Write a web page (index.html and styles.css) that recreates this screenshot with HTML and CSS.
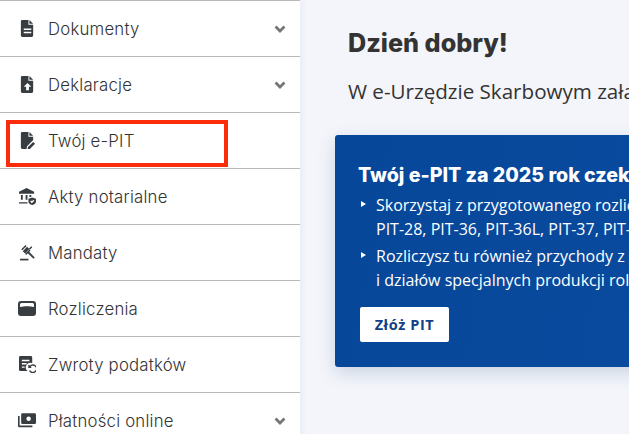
FILE: index.html
```html
<!DOCTYPE html>
<html lang="pl">
<head>
  <meta charset="UTF-8" />
  <meta name="viewport" content="width=device-width, initial-scale=1.0" />
  <title>e-Urząd Skarbowy</title>
  <link rel="stylesheet" href="styles.css">
</head>
<body>
  <nav class="menu">
    <a class="pozycja">
      <svg class="ikona" viewBox="0 0 16 18"><path d="M3 0h6v5h5v11.500a1.500 1.500 0 0 1-1.500 1.500h-10A1.500 1.500 0 0 1 1 16.500v-15A1.500 1.500 0 0 1 3 0zM10 0l4 4h-4zM4 9v1.500h8V9zM4 12.500V14h8v-1.500z" fill-rule="evenodd"/></svg>
      <span class="nazwa">Dokumenty</span>
      <svg class="strzalka" viewBox="0 0 12 8"><path d="M1.500 1.500L6 6l4.500-4.500"/></svg>
    </a>
    <a class="pozycja">
      <svg class="ikona" viewBox="0 0 16 18"><path d="M3 0h6v5h5v11.500a1.500 1.500 0 0 1-1.500 1.500h-10A1.500 1.500 0 0 1 1 16.500v-15A1.500 1.500 0 0 1 3 0zM10 0l4 4h-4zM8 7.500L4 11.500h2.500V15h3v-3.500H12z" fill-rule="evenodd"/></svg>
      <span class="nazwa">Deklaracje</span>
      <svg class="strzalka" viewBox="0 0 12 8"><path d="M1.500 1.500L6 6l4.500-4.500"/></svg>
    </a>
    <a class="pozycja">
      <svg class="ikona" viewBox="0 0 16 18"><path d="M3 0h6v5h5v3.500L7.500 15l-.5 3H2.500A1.500 1.500 0 0 1 1 16.500v-15A1.500 1.500 0 0 1 3 0zM10 0l4 4h-4zM14 10.500l2 2-5.500 5.500-2.500.5.500-2.500z"/></svg>
      <span class="nazwa">Twój e-PIT</span>
      <span class="ramka"></span>
    </a>
    <a class="pozycja">
      <svg class="ikona" viewBox="0 0 18 18"><path d="M8 0L0 4v2h16V4zM0 15h9v1.500H0zM2 7.500h2v5H2zM7 7.500h2v5H7zM11 7.500h2v2h-2zM14 10l4 1.300v3c0 2-1.700 3.200-4 3.700-2.300-.5-4-1.700-4-3.700v-3z"/><path class="wyciecie" d="M12.300 13.800l1.300 1.300 2.200-2.200"/></svg>
      <span class="nazwa">Akty notarialne</span>
    </a>
    <a class="pozycja">
      <svg class="ikona" viewBox="0 0 18 18"><path class="mlotek" d="M3 7l4.500-4.500M11 6.500l2.500-2.500" stroke-width="1.600" transform="translate(0 -1)"/><path class="mlotek" d="M5.200 8.800L9.800 4.200" stroke-width="3.400"/><path class="mlotek" d="M7 11l4.600-4.600" stroke-width="1.600"/><path class="mlotek" d="M9.500 8.500l6.500 6.500" stroke-width="2"/><path class="mlotek" d="M1 16.500h9" stroke-width="1.800"/></svg>
      <span class="nazwa">Mandaty</span>
    </a>
    <a class="pozycja">
      <svg class="ikona szeroka" viewBox="0 0 18 15"><path d="M3 0h12a3 3 0 0 1 3 3v9a3 3 0 0 1-3 3H3a3 3 0 0 1-3-3V3a3 3 0 0 1 3-3zM3.500 2A1.500 1.500 0 0 0 2 3.500V6c4-1 10-1 14 0V3.500A1.500 1.500 0 0 0 14.500 2z" fill-rule="evenodd"/></svg>
      <span class="nazwa">Rozliczenia</span>
    </a>
    <a class="pozycja">
      <svg class="ikona" viewBox="0 0 18 18"><path d="M1.500 0h11A1.500 1.500 0 0 1 14 1.500V7.500a5 5 0 0 0-5 8.500H1.500A1.500 1.500 0 0 1 0 14.500v-13A1.500 1.500 0 0 1 1.500 0zM3 4v1.500h8V4zM3 7.500V9h5V7.500zM3 11v1.500h3V11z" fill-rule="evenodd"/><path class="obrys" d="M10.500 9.500v2.500h2.500M11 12a4 4 0 1 1 .2 3.500"/></svg>
      <span class="nazwa">Zwroty podatków</span>
    </a>
    <a class="pozycja">
      <svg class="ikona szeroka" viewBox="0 0 20 16"><path d="M5 0h13.500A1.500 1.500 0 0 1 20 1.500v9a1.500 1.500 0 0 1-1.500 1.500H5a1.500 1.500 0 0 1-1.500-1.500v-9A1.500 1.500 0 0 1 5 0zM11.800 3.500a2.500 2.500 0 1 0 0 5 2.500 2.500 0 0 0 0-5zM0 3h1.800v10.500H16V15.500H1.500A1.500 1.500 0 0 1 0 14z" fill-rule="evenodd"/></svg>
      <span class="nazwa">Płatności online</span>
      <svg class="strzalka" viewBox="0 0 12 8"><path d="M1.500 1.500L6 6l4.500-4.500"/></svg>
    </a>
  </nav>

  <main class="tresc">
    <h1>Dzień dobry!</h1>
    <p class="wstep">W e-Urzędzie Skarbowym załatwisz swoje sprawy podatkowe</p>
    <section class="karta">
      <h2>Twój e-PIT za 2025 rok czeka na Ciebie</h2>
      <ul>
        <li>Skorzystaj z przygotowanego rozliczenia zeznań podatkowych:<br>PIT-28, PIT-36, PIT-36L, PIT-37, PIT-38, PIT-39</li>
        <li>Rozliczysz tu również przychody z działalności rolniczej<br>i działów specjalnych produkcji rolnej</li>
      </ul>
      <button>Złóż PIT</button>
    </section>
  </main>
</body>
</html>
```

FILE: styles.css
```css
* {
  box-sizing: border-box;
  margin: 0;
  padding: 0;
}

html, body {
  height: 100%;
  overflow: hidden;
}

body {
  display: flex;
  align-items: flex-start;
  background-color: #f3f5fa;
  color: #333;
  font-family: 'Open Sans', sans-serif;
}

.menu {
  flex: 0 0 300px;
  background-color: #fff;
  box-shadow: 2px 0 6px rgba(60, 80, 120, 0.06);
}

.pozycja {
  position: relative;
  display: flex;
  align-items: center;
  height: 56px;
  padding: 0 14px 0 19px;
  border-top: 1px solid #b9b9b9;
}

.ikona {
  flex: 0 0 17px;
  width: 17px;
  height: 17px;
  margin-right: 12px;
  fill: #383d41;
}

.ikona.szeroka {
  margin-left: -1px;
  flex-basis: 18px;
  width: 18px;
}

.wyciecie, .obrys {
  fill: none;
  stroke-width: 1.400;
}

.wyciecie {
  stroke: #fff;
}

.obrys {
  stroke: #383d41;
}

.mlotek {
  fill: none;
  stroke: #383d41;
}

.nazwa {
  flex: 1;
  font-family: 'Inter', sans-serif;
  font-size: 16.800px;
  font-weight: 300;
  letter-spacing: 0.2px;
  color: #333;
}

.strzalka {
  width: 12px;
  height: 8px;
  fill: none;
  stroke: #757575;
  stroke-width: 2.800;
}

.ramka {
  position: absolute;
  left: 6px;
  top: 7px;
  width: 222px;
  height: 47px;
  border: 4px solid #fb2c0c;
}

.tresc {
  flex: 1;
  min-width: 0;
  padding: 28px 0 0 35px;
}

h1 {
  margin-left: 13px;
  font-family: 'Inter', sans-serif;
  font-size: 25.200px;
  font-weight: 800;
  line-height: 30px;
  color: #333;
}

.wstep {
  margin: 19px 0 0 13px;
  font-size: 20.600px;
  line-height: 28px;
  white-space: nowrap;
}

.karta {
  width: 640px;
  height: 232px;
  margin-top: 30px;
  padding: 28px 0 0 23px;
  border-radius: 3px;
  background: linear-gradient(100deg, #07479a, #0a4da1);
  box-shadow: 0 6px 18px rgba(40, 80, 140, 0.2);
  color: #fff;
}

h2 {
  font-family: 'Inter', sans-serif;
  font-size: 19.600px;
  font-weight: 800;
  line-height: 24px;
  white-space: nowrap;
}

ul {
  list-style: none;
  margin-top: 6px;
}

li {
  position: relative;
  padding-left: 18px;
  margin-bottom: 3px;
  font-size: 16px;
  line-height: 24px;
  white-space: nowrap;
}

li::before {
  content: "";
  position: absolute;
  left: 3px;
  top: 8px;
  border-left: 5px solid #fff;
  border-top: 3px solid transparent;
  border-bottom: 3px solid transparent;
}

button {
  display: block;
  width: 89px;
  height: 35px;
  margin: 15px 0 0 2px;
  border: none;
  border-radius: 2px;
  background-color: #fff;
  color: #123f85;
  font-family: 'Open Sans', sans-serif;
  font-size: 14.500px;
  font-weight: 700;
  letter-spacing: 0.6px;
}
```
